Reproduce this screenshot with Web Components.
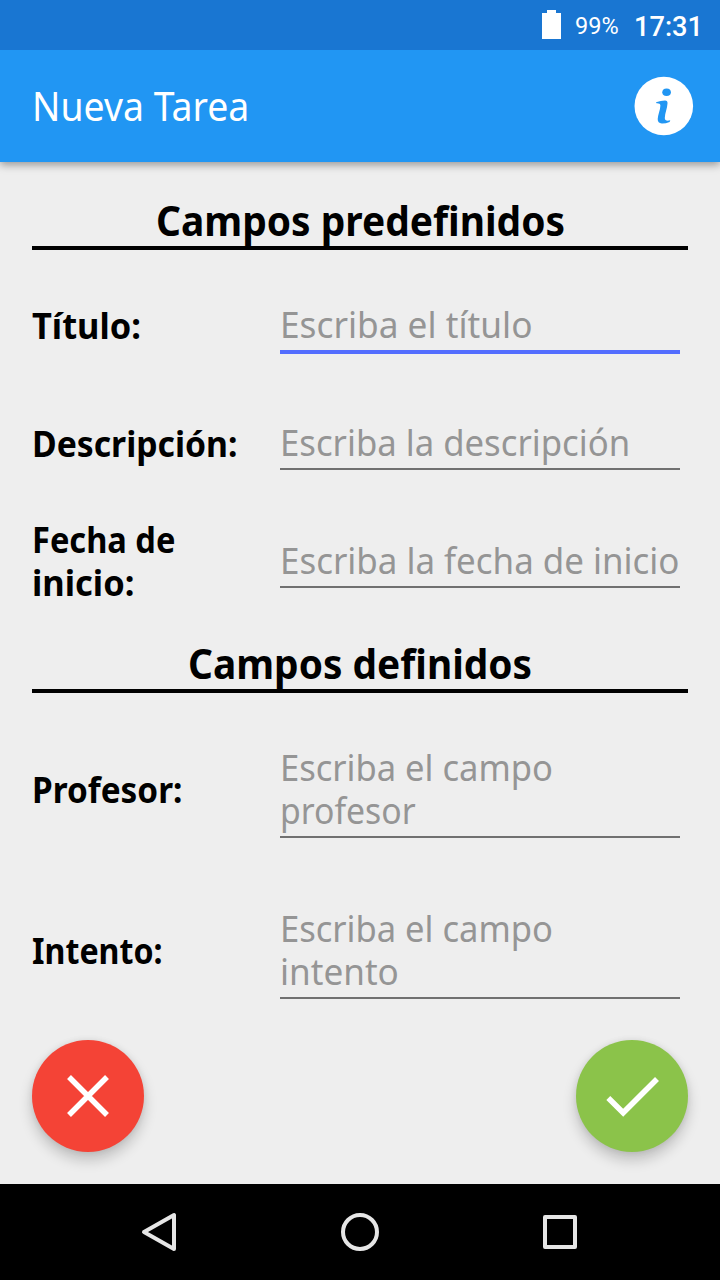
<!DOCTYPE html>
<html lang="es">
<head>
<meta charset="utf-8">
<title>Nueva Tarea</title>
<style>
html,body{margin:0;padding:0}
body{width:720px;height:1280px;overflow:hidden;background:#eee;font-family:"Noto Sans",sans-serif;color:#000}
</style>
</head>
<body>
<task-screen></task-screen>
<script>
function define(name, html, setup) {
  customElements.define(name, class extends HTMLElement {
    connectedCallback() {
      if (this.shadowRoot) return;
      const t = document.createElement('template');
      t.innerHTML = html;
      this.attachShadow({ mode: 'open' }).appendChild(t.content.cloneNode(true));
      if (setup) setup.call(this, this.shadowRoot);
    }
  });
}

// A single line of text condensed horizontally to the width in its "w" attribute.
define('fit-text', `<style>
:host{display:block;white-space:nowrap}
span{display:inline-block;transform-origin:0 50%}
</style><span><slot></slot></span>`, function (root) {
  const w = +this.getAttribute('w');
  const s = root.querySelector('span');
  this.style.width = w + 'px';
  s.style.transform = 'scaleX(' + (w / s.offsetWidth) + ')';
});

define('status-bar', `<style>
:host{display:flex;height:50px;box-sizing:border-box;padding-right:17px;justify-content:flex-end;align-items:center;background:#1976d2;color:#fff;font-family:Roboto,sans-serif}
svg{display:block;margin:0 14px 1px 0}
.pct{font-size:24px;line-height:28px;margin-right:15px;padding-top:2px}
.time{font-size:28px;line-height:32px;font-weight:500;padding-top:3px}
</style>
<svg width="19" height="29" viewBox="0 0 19 29"><path fill="#fff" d="M5 0h9v3h5v26H0V3h5z"/></svg>
<fit-text class="pct" w="44">99%</fit-text><fit-text class="time" w="69">17:31</fit-text>`);

define('app-bar', `<style>
:host{display:flex;height:112px;box-sizing:border-box;padding:0 26px 0 32px;justify-content:space-between;align-items:center;background:#2196f3;color:#fff;box-shadow:0 3px 8px rgba(0,0,0,.36);font-size:40px;line-height:50px}
svg{display:block}
</style>
<slot></slot>
<svg width="60" height="60" viewBox="634 76 60 60"><circle cx="663.8" cy="106" r="29.3" fill="#fff"/><g fill="#2196f3"><ellipse cx="666.6" cy="92.2" rx="4.3" ry="3.8"/><path d="M656 102.3Q661 100.4 665 100.4Q667.8 100.5 667.5 103.5C667.2 108.500 665 113 664.8 118Q664.8 121.600 670.3 120.300L669.6 121.900Q665.500 123.500 661.800 123.400Q657.600 123.100 657.700 119C657.900 114.500 660.300 110 660.400 105.500Q660.300 103 656.500 103.200Z"/></g></svg>`);

define('section-title', `<style>
:host{display:flex;box-sizing:border-box;align-items:flex-end;justify-content:center;padding-bottom:1px;margin-bottom:15px;border-bottom:4px solid #000;font-size:41px;line-height:50px;font-weight:700}
</style><slot></slot>`);

define('form-row', `<style>
:host{display:grid;grid-template-columns:248px 400px;height:118px;font-size:36px;line-height:43px}
:host([tall]){height:161px}
.label{align-self:center;font-weight:700;padding-top:2px}
.field{align-self:end;margin-bottom:31px;padding-bottom:4px;border-bottom:2px solid #707070;color:#959595}
:host([active]) .field{margin-bottom:29px;border-bottom:4px solid #536dfe}
</style><div class="label"><slot name="label"></slot></div><div class="field"><slot></slot></div>`);

define('round-button', `<style>
:host{display:block;width:112px;height:112px;border-radius:50%;background:var(--tone);box-shadow:0 8px 14px rgba(0,0,0,.2),0 0 6px rgba(0,0,0,.08)}
</style><slot></slot>`);

define('nav-bar', `<style>
:host{display:flex;height:96px;background:#000;justify-content:center}
svg{display:block}
</style>
<svg width="480" height="96" viewBox="120 1184 480 96" fill="none" stroke="#e6e6e6" stroke-width="4" stroke-linejoin="round"><path d="M144 1232L174 1215V1249Z"/><circle cx="360" cy="1232" r="17"/><rect x="545" y="1217" width="30" height="30"/></svg>`);

define('task-screen', `<style>
:host{display:flex;flex-direction:column;width:720px;height:1280px;background:#eee}
status-bar{z-index:2}
app-bar{z-index:1}
main{flex:1;padding:0 32px}
.first{height:88px}
.second{height:74px}
footer{display:flex;justify-content:space-between;padding-top:10px}
svg{display:block}
</style>
<status-bar></status-bar>
<app-bar><fit-text w="217">Nueva Tarea</fit-text></app-bar>
<main>
<section-title class="first"><fit-text w="409">Campos predefinidos</fit-text></section-title>
<form-row active><fit-text slot="label" w="109">Título:</fit-text><fit-text w="252.5">Escriba el título</fit-text></form-row>
<form-row><fit-text slot="label" w="205">Descripción:</fit-text><fit-text w="350">Escriba la descripción</fit-text></form-row>
<form-row><fit-text slot="label" w="143">Fecha de</fit-text><fit-text slot="label" w="102.5">inicio:</fit-text><fit-text w="399.5">Escriba la fecha de inicio</fit-text></form-row>
<section-title class="second"><fit-text w="344">Campos definidos</fit-text></section-title>
<form-row tall><fit-text slot="label" w="150">Profesor:</fit-text><fit-text w="272.5">Escriba el campo</fit-text><fit-text w="136">profesor</fit-text></form-row>
<form-row tall><fit-text slot="label" w="130.5">Intento:</fit-text><fit-text w="272.5">Escriba el campo</fit-text><fit-text w="119">intento</fit-text></form-row>
<footer>
<round-button style="--tone:#f44336"><svg width="112" height="112" viewBox="0 0 112 112"><path d="M37 37L75 75M75 37L37 75" stroke="#fff" stroke-width="5.500"/></svg></round-button>
<round-button style="--tone:#8bc34a"><svg width="112" height="112" viewBox="0 0 112 112"><path d="M32.300 58L47.200 72.800L81 39" fill="none" stroke="#fff" stroke-width="5.600"/></svg></round-button>
</footer>
</main>
<nav-bar></nav-bar>`);
</script>
</body>
</html>
